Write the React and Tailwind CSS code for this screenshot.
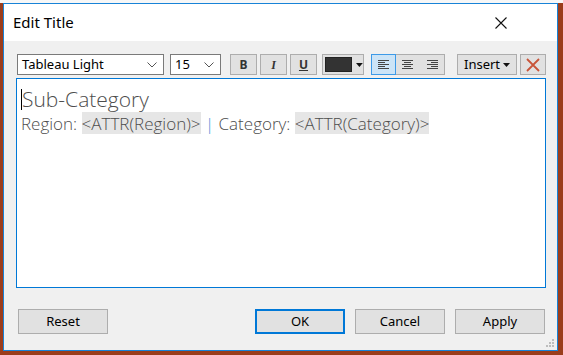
import { memo } from "react";

const ui = { fontFamily: '"Noto Sans", "Open Sans", Arial, sans-serif' };
const tab = { fontFamily: '"Open Sans", "Noto Sans", sans-serif' };

const Chevron = () => (
  <svg width="10" height="6" viewBox="0 0 10 6" className="text-[#555]">
    <path d="M0.5 0.5 L5 5 L9.5 0.5" fill="none" stroke="currentColor" strokeWidth="1" />
  </svg>
);

const Caret = () => (
  <svg width="7" height="4" viewBox="0 0 7 4">
    <path d="M0 0 H7 L3.5 4 Z" fill="#111" />
  </svg>
);

const AlignIcon = ({ mode }) => {
  const widths = [11, 7, 11, 7, 11];
  return (
    <svg width="11" height="9" viewBox="0 0 11 9">
      {widths.map((w, i) => {
        const x = mode === "left" ? 0 : mode === "center" ? (11 - w) / 2 : 11 - w;
        return <rect key={i} x={x} y={i * 2} width={w} height="1" fill="#444" />;
      })}
    </svg>
  );
};

const ToolBtn = ({ children, className = "" }) => (
  <div
    className={`h-[21px] flex items-center justify-center border border-[#adadad] bg-[#e1e1e1] ${className}`}
  >
    {children}
  </div>
);

const DlgBtn = ({ label, primary }) => (
  <div
    className={`w-[90px] h-[25px] flex items-center justify-center bg-[#e1e1e1] text-[13px] text-black ${
      primary ? "border-2 border-[#0078d7]" : "border border-[#adadad]"
    }`}
    style={ui}
  >
    {label}
  </div>
);

const EditTitleDialog = memo(() => {
  return (
    <div className="w-[563px] h-[355px] bg-[#9b3d1c] flex flex-col overflow-hidden">
      {/* sheet strip behind the dialog */}
      <div className="h-[3px] bg-[#f7f7f7] shrink-0" />
      <div className="flex-1 pl-[3px] pr-[5px] pb-[4px] flex">
        <div className="flex-1 border border-[#1883d7] bg-[#f0f0f0] flex flex-col relative">
          {/* Title bar */}
          <div className="h-[37px] bg-white flex items-center justify-between pl-[9px] pr-[50px] shrink-0">
            <span className="text-[15px] text-black" style={ui}>
              Edit Title
            </span>
            <svg width="12" height="12" viewBox="0 0 12 12">
              <path d="M0.5 0.5 L11.5 11.5 M11.5 0.5 L0.5 11.5" stroke="#111" strokeWidth="1.1" />
            </svg>
          </div>

          {/* Body */}
          <div className="flex-1 flex flex-col pl-[13px] pr-[10px] pt-[13px]">
            {/* Toolbar */}
            <div className="flex items-center h-[21px]">
              <div className="w-[147px] h-[21px] bg-white border border-[#7a7a7a] flex items-center justify-between pl-[4px] pr-[6px]">
                <span className="text-[13px] text-black" style={ui}>
                  Tableau Light
                </span>
                <Chevron />
              </div>
              <div className="ml-[6px] w-[51px] h-[21px] bg-white border border-[#7a7a7a] flex items-center justify-between pl-[4px] pr-[6px]">
                <span className="text-[13px] text-black" style={ui}>
                  15
                </span>
                <Chevron />
              </div>
              <ToolBtn className="ml-[9px] w-[27px]">
                <span className="text-[12px] font-bold text-[#333]" style={ui}>
                  B
                </span>
              </ToolBtn>
              <ToolBtn className="ml-[3px] w-[27px]">
                <span className="text-[12px] font-bold italic text-[#333]" style={{ fontFamily: '"Liberation Serif", serif' }}>
                  I
                </span>
              </ToolBtn>
              <ToolBtn className="ml-[3px] w-[27px]">
                <span className="text-[12px] font-bold underline text-[#333]" style={ui}>
                  U
                </span>
              </ToolBtn>
              <ToolBtn className="ml-[5px] w-[42px] justify-start pl-[2px] gap-[4px]">
                <div className="w-[28px] h-[15px] bg-[#333] border border-[#222]" />
                <Caret />
              </ToolBtn>
              <div className="ml-[7px] flex h-[21px] border border-[#adadad] bg-[#e1e1e1]">
                <div className="w-[25px] flex items-center justify-center bg-[#cce4f7] border border-[#3d9ae8] -m-px">
                  <AlignIcon mode="left" />
                </div>
                <div className="w-[25px] flex items-center justify-center">
                  <AlignIcon mode="center" />
                </div>
                <div className="w-[24px] flex items-center justify-center">
                  <AlignIcon mode="right" />
                </div>
              </div>
              <ToolBtn className="ml-[12px] w-[60px] gap-[3px]">
                <span className="text-[13px] text-black" style={ui}>
                  Insert
                </span>
                <Caret />
              </ToolBtn>
              <ToolBtn className="ml-[3px] w-[26px]">
                <svg width="14" height="14" viewBox="0 0 14 14">
                  <path d="M1 1 L13 13 M13 1 L1 13" stroke="#c8553a" strokeWidth="1.8" />
                </svg>
              </ToolBtn>
            </div>

            {/* Editor */}
            <div className="mt-[3px] h-[210px] w-[530px] -ml-px bg-white border border-[#0078d7] pl-[4px] pt-[8px]" style={tab}>
              <div className="flex items-center h-[25px]">
                <div className="w-px h-[21px] bg-black" />
                <span className="text-[21px] font-light text-[#4d4d4d] leading-none">Sub-Category</span>
              </div>
              <div className="flex items-center h-[22px] text-[17px] font-light text-[#4d4d4d] leading-none whitespace-pre">
                <span>Region: </span>
                <span className="bg-[#e6e6e6] h-[22px] flex items-center">&lt;ATTR(Region)&gt;</span>
                <span> </span>
                <span className="text-[#4a8ad6]">|</span>
                <span> Category: </span>
                <span className="bg-[#e6e6e6] h-[22px] flex items-center">&lt;ATTR(Category)&gt;</span>
              </div>
            </div>

            {/* Buttons */}
            <div className="mt-[21px] flex items-center pl-px pr-[2px]">
              <DlgBtn label="Reset" />
              <div className="flex-1" />
              <DlgBtn label="OK" primary />
              <div className="w-[10px]" />
              <DlgBtn label="Cancel" />
              <div className="w-[10px]" />
              <DlgBtn label="Apply" />
            </div>
          </div>

          {/* Resize grip */}
          <svg width="9" height="9" viewBox="0 0 9 9" className="absolute right-[2px] bottom-[2px]">
            {[
              [6, 0],
              [3, 3],
              [6, 3],
              [0, 6],
              [3, 6],
              [6, 6],
            ].map(([x, y], i) => (
              <rect key={i} x={x} y={y} width="2" height="2" fill="#bdbdbd" />
            ))}
          </svg>
        </div>
      </div>
    </div>
  );
});

EditTitleDialog.displayName = "EditTitleDialog";

export default function App() {
  return <EditTitleDialog />;
}
